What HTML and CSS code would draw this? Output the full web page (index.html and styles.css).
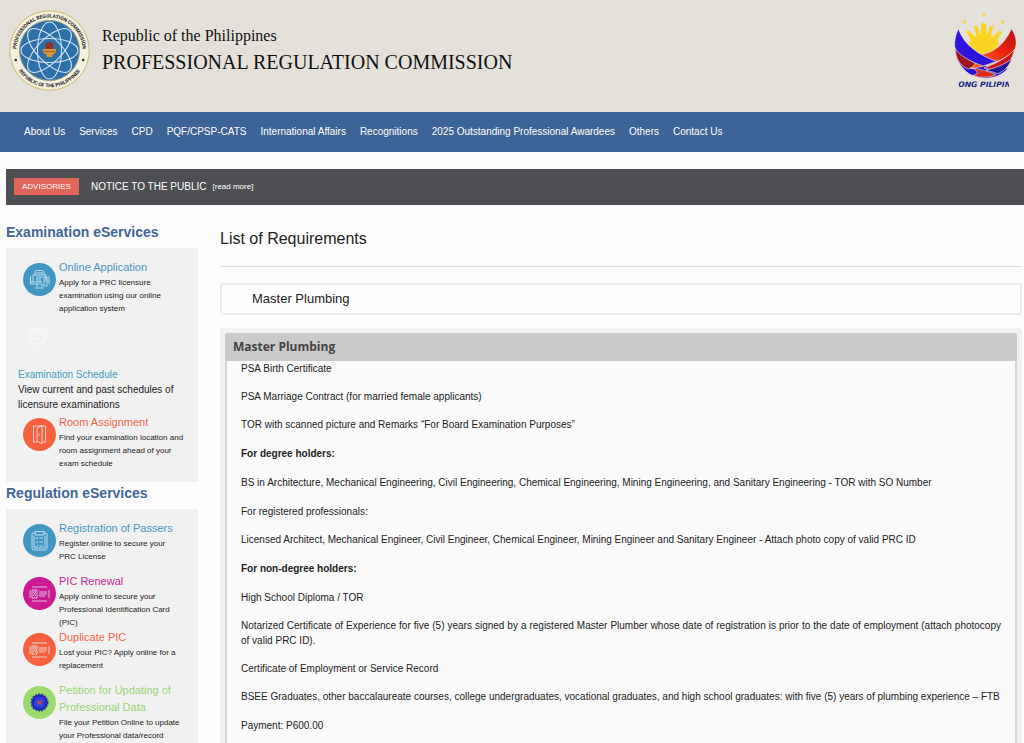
FILE: index.html
```html
<!DOCTYPE html>
<html lang="en">
<head>
  <meta charset="UTF-8" />
  <meta name="viewport" content="width=device-width, initial-scale=1.0" />
  <title>Professional Regulation Commission</title>
  <link rel="stylesheet" href="styles.css">
</head>
<body>

  <!-- Header -->
  <header class="header">
    <svg class="seal" viewBox="0 0 81 81" role="img" aria-label="PRC seal">
      <defs>
        <path id="arc-top" d="M9.600 53 A33.200 33.200 0 1 1 71.400 53" />
        <path id="arc-bottom" d="M3.700 40.500 A36.800 36.800 0 0 0 77.300 40.500" />
      </defs>
      <circle cx="40.5" cy="40.5" r="39.8" fill="#f4f0df" stroke="#cdbb6a" />
      <circle cx="40.5" cy="40.5" r="30" fill="#2f6fa8" stroke="#8d9a72" />
      <g fill="none" stroke="#cfe5f7" stroke-width="1.1">
        <ellipse cx="40.5" cy="40.5" rx="28.5" ry="12" />
        <ellipse cx="40.5" cy="40.5" rx="28.5" ry="12" transform="rotate(45 40.5 40.5)" />
        <ellipse cx="40.5" cy="40.5" rx="28.5" ry="12" transform="rotate(90 40.5 40.5)" />
        <ellipse cx="40.5" cy="40.5" rx="28.5" ry="12" transform="rotate(135 40.5 40.5)" />
      </g>
      <circle cx="40.5" cy="36" r="4" fill="#8e3425" />
      <path d="M34 39 h13 v3 l-2 2 h-1 l-1 3 h-5 l-1 -3 h-1 l-2 -2 z" fill="#dc9535" />
      <path d="M35 41.500 h11" stroke="#8a5a22" stroke-width="0.8" />
      <circle cx="6.800" cy="50" r="1.200" fill="#222" />
      <circle cx="74.200" cy="50" r="1.200" fill="#222" />
      <g class="seal-text">
        <text><textPath href="#arc-top" startOffset="50%" text-anchor="middle">PROFESSIONAL REGULATION COMMISSION</textPath></text>
        <text><textPath href="#arc-bottom" startOffset="50%" text-anchor="middle">REPUBLIC OF THE PHILIPPINES</textPath></text>
      </g>
    </svg>
    <div class="agency">
      <p class="republic">Republic of the Philippines</p>
      <h1>PROFESSIONAL REGULATION COMMISSION</h1>
    </div>
    <svg class="pilipinas" viewBox="90 36 189 234" role="img" aria-label="Bagong Pilipinas">
      <defs>
        <linearGradient id="flame" x1="0" x2="1" y1="1" y2="0">
          <stop offset="0.2" stop-color="#ff5a14" />
          <stop offset="0.55" stop-color="#e8260f" />
          <stop offset="1" stop-color="#b80f12" />
        </linearGradient>
      </defs>
      <g fill="#fbd423">
        <path d="M172 72 q7 -8 14 0 l3 32 h-20 z" />
        <path d="M150 80 q6 -6 11 1 l8 29 l-9 6 z" />
        <path d="M208 80 q-6 -6 -11 1 l-8 29 l9 6 z" />
        <path d="M126 96 q5 -7 12 -1 l26 25 l-15 16 z" />
        <path d="M234 96 q-5 -7 -12 -1 l-26 25 l15 16 z" />
        <path d="M134 128 q46 -54 92 0 l-26 50 h-40 z" />
        <path d="M180 38 l2 4 4 0 -3 3 1 4 -4 -2 -4 2 1 -4 -3 -3 4 0z" />
        <path d="M122 60 l2 4 4 0 -3 3 1 4 -4 -2 -4 2 1 -4 -3 -3 4 0z" />
        <path d="M236 60 l2 4 4 0 -3 3 1 4 -4 -2 -4 2 1 -4 -3 -3 4 0z" />
      </g>
      <g stroke="#e4e1da" stroke-width="2">
        <path d="M94 143 C122 185 185 205 252 205 C220 245 145 245 115 202 C98 183 93 160 94 143 Z" fill="#2a12d6" />
        <path d="M94 145 C110 165 138 183 165 194 L133 207 C105 195 95 175 94 145 Z" fill="#9d1419" />
        <path d="M272 145 C267 176 250 197 228 216 L180 204 C230 185 255 168 272 145 Z" fill="#c9161b" />
        <path d="M264 176 C252 205 236 214 222 221 L186 210 Q235 200 264 176 Z" fill="#23149c" />
        <path d="M140 203 C170 208 195 214 216 224 C195 234 165 234 146 226 C170 222 160 210 140 203 Z" fill="#e0281a" />
        <path d="M263 86 C278 110 279 130 273 147 C243 183 190 198 140 206 Q165 187 150 165 C205 165 238 137 263 86 Z" fill="url(#flame)" />
        <path d="M103 86 C120 135 165 166 218 184 L178 198 C138 185 100 164 92 140 C91 118 96 102 103 86 Z" fill="#3013dd" />
      </g>
      <svg x="104" y="244" width="151" height="20" viewBox="104 244 151 20">
        <text class="motto" x="172" y="262" text-anchor="middle">BAGONG PILIPINAS</text>
      </svg>
    </svg>
  </header>

  <!-- Main menu -->
  <nav class="menu">
    <a href="#">About Us</a>
    <a href="#">Services</a>
    <a href="#">CPD</a>
    <a href="#">PQF/CPSP-CATS</a>
    <a href="#">International Affairs</a>
    <a href="#">Recognitions</a>
    <a href="#">2025 Outstanding Professional Awardees</a>
    <a href="#">Others</a>
    <a href="#">Contact Us</a>
  </nav>

  <!-- Advisories -->
  <div class="notice">
    <span class="badge">ADVISORIES</span>
    <span class="notice-title">NOTICE TO THE PUBLIC</span>
    <a href="#">[read more]</a>
  </div>

  <div class="layout">

    <!-- Sidebar -->
    <aside class="sidebar">
      <h2>Examination eServices</h2>
      <div class="services">
        <div class="service blue">
          <svg class="icon" viewBox="0 0 33 33" aria-hidden="true">
            <circle cx="16.500" cy="16.500" r="16.500" />
            <g>
              <path d="M12 12 V9 Q12 7.500 14 7.500 H19 Q21 7.500 21 9 V12 M10 19 V12 H23 V19 M13 10 H20 M13 14 H20 M13 16 H18 M13 18 H18" />
              <path d="M7.500 13 V21 H19 M7.500 19 H19 M21 14 h3 v9 h-3 z M26 13 v8 M14 21 v3 M19 21 v3 M12 25 h9" />
            </g>
          </svg>
          <div>
            <h3><a href="#">Online Application</a></h3>
            <p>Apply for a PRC licensure examination using our online application system</p>
          </div>
        </div>
        <div class="schedule">
          <svg class="calendar" viewBox="0 0 20 20" aria-hidden="true">
            <path d="M2 3 H18 V14 L14 18 H2 Z M2 6 H18 M6 1 V4 M14 1 V4 M5 9 h2 M9 9 h2 M13 9 h2 M5 12 h2 M9 12 h2 M14 18 V14 H18" />
          </svg>
          <h3><a href="#">Examination Schedule</a></h3>
          <p>View current and past schedules of licensure examinations</p>
        </div>
        <div class="service orange">
          <svg class="icon" viewBox="0 0 33 33" aria-hidden="true">
            <circle cx="16.500" cy="16.500" r="16.500" />
            <path d="M14 24 H10.500 V8 H22.500 V24 H19 M14 10 L19 7.500 V25.500 L14 23.500 Z M16 15.500 v2" />
          </svg>
          <div>
            <h3><a href="#">Room Assignment</a></h3>
            <p>Find your examination location and room assignment ahead of your exam schedule</p>
          </div>
        </div>
      </div>

      <h2>Regulation eServices</h2>
      <div class="services last">
        <div class="service blue">
          <svg class="icon" viewBox="0 0 33 33" aria-hidden="true">
            <circle cx="16.500" cy="16.500" r="16.500" />
            <path d="M12 9 H10 Q9 9 9 10.500 V24 Q9 26 11 26 H22 Q24 26 24 24 V10.500 Q24 9 22 9 H21 M12 7.500 H21 V11 H12 Z M11 12 V24 H22 V12 M12.500 14 l1 1 l1.500 -2 M16.500 14 H20 M12.500 18 l1 1 l1.500 -2 M16.500 18 H20 M12.500 22 l1 1 l1.500 -2 M16.500 22 H20" />
          </svg>
          <div>
            <h3><a href="#">Registration of Passers</a></h3>
            <p>Register online to secure your PRC&nbsp;License</p>
          </div>
        </div>
        <div class="service magenta">
          <svg class="icon" viewBox="0 0 33 33" aria-hidden="true">
            <circle cx="16.500" cy="16.500" r="16.500" />
            <path d="M9 10 H24 M9 24 H24 M7 13 V21 M26 13 V21 M9 21 V13 H14 V21 Z M10 19 q1.500 -3 3 0 M16 15 H24 M16 17 H24 M16 19 H22" />
            <path d="M10.500 15.500 a1 1 0 1 0 2 0 a1 1 0 1 0 -2 0" />
          </svg>
          <div>
            <h3><a href="#">PIC Renewal</a></h3>
            <p>Apply online to secure your Professional Identification Card (PIC)</p>
          </div>
        </div>
        <div class="service orange">
          <svg class="icon" viewBox="0 0 33 33" aria-hidden="true">
            <circle cx="16.500" cy="16.500" r="16.500" />
            <path d="M9 10 H24 M9 24 H24 M7 13 V21 M26 13 V21 M9 21 V13 H14 V21 Z M10 19 q1.500 -3 3 0 M16 15 H24 M16 17 H24 M16 19 H22" />
            <path d="M10.500 15.500 a1 1 0 1 0 2 0 a1 1 0 1 0 -2 0" />
          </svg>
          <div>
            <h3><a href="#">Duplicate PIC</a></h3>
            <p>Lost your PIC? Apply online for a replacement</p>
          </div>
        </div>
        <div class="service green">
          <svg class="icon" viewBox="0 0 33 33" aria-hidden="true">
            <circle cx="16.500" cy="16.500" r="16.500" />
            <circle class="gear" cx="16.500" cy="16.500" r="8" />
            <g class="orbits">
              <ellipse cx="16.500" cy="16.500" rx="6" ry="2.500" />
              <ellipse cx="16.500" cy="16.500" rx="2.500" ry="6" />
              <ellipse cx="16.500" cy="16.500" rx="6" ry="2.500" transform="rotate(45 16.500 16.500)" />
              <ellipse cx="16.500" cy="16.500" rx="6" ry="2.500" transform="rotate(135 16.500 16.500)" />
            </g>
            <circle class="core" cx="16.500" cy="16.500" r="2" />
          </svg>
          <div>
            <h3><a href="#">Petition for Updating of Professional Data</a></h3>
            <p>File your Petition Online to update your Professional data/record</p>
          </div>
        </div>
      </div>
    </aside>

    <!-- Requirements -->
    <main class="content">
      <h2>List of Requirements</h2>
      <select class="profession" aria-label="Profession">
        <option>Master Plumbing</option>
      </select>

      <div class="panel">
        <h3>Master Plumbing</h3>
        <div class="panel-body">
          <section>
            <p>PSA Birth Certificate</p>
            <p>PSA Marriage Contract (for married female applicants)</p>
            <p>TOR with scanned picture and Remarks “For Board Examination Purposes”</p>
          </section>
          <section>
            <h4>For degree holders:</h4>
            <p>BS in Architecture, Mechanical Engineering, Civil Engineering, Chemical Engineering, Mining Engineering, and Sanitary Engineering - TOR with SO Number</p>
          </section>
          <section>
            <p>For registered professionals:</p>
            <p>Licensed Architect, Mechanical Engineer, Civil Engineer, Chemical Engineer, Mining Engineer and Sanitary Engineer - Attach photo copy of valid PRC ID</p>
          </section>
          <section>
            <h4>For non-degree holders:</h4>
            <p>High School Diploma / TOR</p>
            <p>Notarized Certificate of Experience for five (5) years signed by a registered Master Plumber whose date of registration is prior to the date of employment (attach photocopy of valid PRC ID).</p>
            <p>Certificate of Employment or Service Record</p>
            <p>BSEE Graduates, other baccalaureate courses, college undergraduates, vocational graduates, and high school graduates: with five (5) years of plumbing experience – FTB</p>
          </section>
          <p>Payment: P600.00</p>
        </div>
      </div>
    </main>

  </div>

</body>
</html>
```
FILE: styles.css
```css
* {
  box-sizing: border-box;
}

body {
  font-family: "Liberation Sans", Arial, sans-serif;
  font-size: 10px;
  line-height: 15px;
  margin: 0;
  min-height: 100vh;
  display: flex;
  flex-direction: column;
  background: #fdfdfd;
  color: #222;
}

h1, h2, h3, h4, p {
  margin: 0;
}

a {
  color: inherit;
  text-decoration: none;
}

/* Header */
.header {
  display: flex;
  align-items: flex-start;
  gap: 12px;
  padding: 10px 7px 10px 9px;
  min-height: 112px;
  background: #e4e1da;
}

.seal {
  width: 81px;
  height: 81px;
}

.seal-text {
  font-family: Roboto, sans-serif;
  font-size: 5px;
  font-weight: bold;
  fill: #222;
}

.agency {
  flex: 1;
  padding-top: 12px;
  font-family: "Liberation Serif", "Times New Roman", serif;
  line-height: 27px;
  color: #111;
}

.republic {
  font-size: 16px;
}

h1 {
  font-size: 20px;
  font-weight: normal;
}

.pilipinas {
  width: 63px;
  height: 78px;
  margin-top: 2px;
}

.motto {
  font-family: "DejaVu Sans", sans-serif;
  font-size: 23px;
  font-weight: bold;
  font-style: italic;
  fill: #172a86;
}

/* Menu */
.menu {
  display: flex;
  align-items: center;
  flex-wrap: wrap;
  gap: 0 14px;
  min-height: 40px;
  padding: 0 24px 2px;
  background: #3d6496;
  color: #fff;
}

/* Advisories */
.notice {
  display: flex;
  align-items: center;
  min-height: 36px;
  margin: 17px 0 0 6px;
  padding: 0 8px 2px;
  background: #4d4f52;
  color: #fff;
}

.badge {
  padding: 1px 8px;
  margin-right: 12px;
  background: #df6659;
  font-size: 8px;
}

.notice a {
  margin-left: 6px;
  font-size: 8px;
}

/* Columns */
.layout {
  flex: 1;
  display: grid;
  grid-template-columns: 192px 1fr;
  gap: 22px;
  padding: 16px 2px 0 6px;
}

.sidebar {
  display: flex;
  flex-direction: column;
}

.sidebar h2 {
  margin-bottom: 5px;
  font-size: 14px;
  line-height: 22px;
  color: #426697;
}

.services {
  padding: 11px 12px 12px 17px;
  background: #f1f1f1;
}

.services.last {
  flex: 1;
  padding-bottom: 0;
}

.service {
  display: flex;
  gap: 3px;
  min-height: 53px;
}

.service h3 {
  font-size: 11px;
  font-weight: normal;
  line-height: 17px;
}

.service p {
  font-size: 8px;
  line-height: 13px;
}

.icon {
  flex: none;
  width: 33px;
  height: 33px;
  margin-top: 4px;
  fill: none;
  stroke: #d9edf6;
  stroke-width: 0.8;
}

.icon > circle {
  stroke: none;
}

.blue h3 {
  color: #4597c3;
}

.blue .icon > circle {
  fill: #4197c1;
}

.orange h3 {
  color: #f2664a;
}

.orange .icon > circle {
  fill: #f66240;
}

.magenta h3 {
  color: #cb2592;
}

.magenta .icon > circle {
  fill: #cc1b90;
}

.green h3 {
  color: #98d773;
}

.green .icon > circle {
  fill: #9bdb6d;
}

.green .icon > .gear {
  fill: #1a1fc4;
  stroke: #29379a;
  stroke-width: 2;
  stroke-dasharray: 2 1;
}

.orbits {
  stroke: #5b6cf0;
  stroke-width: 0.5;
}

.green .icon > .core {
  fill: #c2443c;
}

.schedule {
  margin-left: -5px;
  padding: 11px 0 2px;
}

.calendar {
  display: block;
  width: 20px;
  height: 20px;
  margin: 0 0 21px 10px;
  fill: none;
  stroke: #fafafa;
}

.schedule h3 {
  font-size: 10px;
  font-weight: normal;
  color: #3fa0bf;
}

/* Requirements */
.content {
  display: flex;
  flex-direction: column;
}

.content h2 {
  padding: 7px 0 16px;
  border-bottom: 1px solid #ddd;
  font-size: 16px;
  font-weight: normal;
  line-height: 22px;
}

.profession {
  appearance: none;
  width: 100%;
  height: 32px;
  margin: 16px 0 13px;
  padding: 0 30px 2px;
  border: 2px solid #ececec;
  border-radius: 3px;
  background: #fefefe;
  color: #222;
  font-family: inherit;
  font-size: 13px;
}

.panel {
  flex: 1;
  display: flex;
  flex-direction: column;
  padding: 5px 5px 0;
  background: #f1f1f1;
}

.panel h3 {
  padding: 0 8px;
  border-radius: 2px 2px 0 0;
  background: #cacaca;
  color: #444;
  font-family: "Open Sans", sans-serif;
  font-size: 12px;
  line-height: 28px;
}

.panel-body {
  flex: 1;
  padding: 0 14px;
  border: solid #d5d5d5;
  border-width: 0 2px;
  background: #fafafa;
  text-align: justify;
}

.panel-body section {
  margin-bottom: 14px;
}

.panel-body p + p,
.panel-body h4 + p {
  margin-top: 13px;
}

.panel-body h4 {
  font-size: 10px;
  line-height: 16px;
}
```
